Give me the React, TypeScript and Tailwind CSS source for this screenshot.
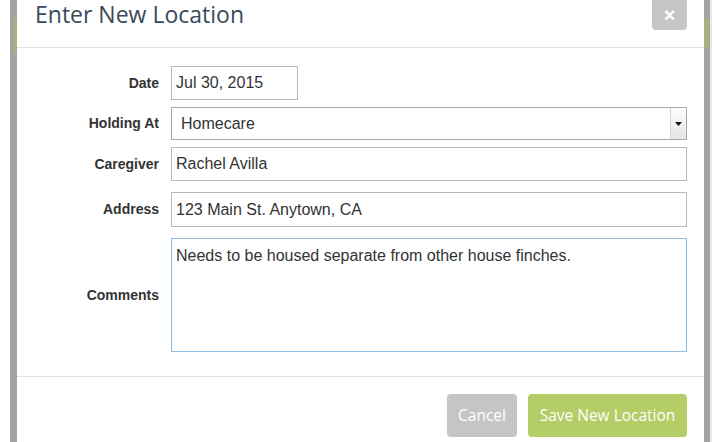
const sans = { fontFamily: '"Liberation Sans", Arial, sans-serif' };
const open = { fontFamily: '"Open Sans", sans-serif' };

function Label({ children }: { children: string }) {
  return (
    <div className="flex items-center justify-end text-[14px] font-bold text-[#333]">
      {children}
    </div>
  );
}

export default function App() {
  return (
    <div className="flex h-[442px] w-[712px] overflow-hidden bg-white">
      {/* backdrop edge, left */}
      <div className="w-[10px] shrink-0 bg-white" />
      <div className="flex w-[7px] shrink-0 flex-col bg-[#a3a3a3]">
        <div className="mt-[18px] ml-[4px] h-[34px] w-[3px] bg-[#a9b27c]" />
      </div>

      {/* modal */}
      <div className="flex w-[687px] shrink-0 flex-col bg-white">
        <div className="flex h-[48px] shrink-0 items-start justify-between border-b border-[#e3e3e3] pl-[18px] pr-[17px]">
          <h1 className="text-[23px] leading-[28px] text-[#3b4a5b]" style={open}>
            Enter New Location
          </h1>
          <button
            type="button"
            className="flex h-[30px] w-[35px] items-center justify-center rounded-b-[4px] bg-[#c6c6c6] text-[20px] font-bold leading-none text-white"
            style={sans}
          >
            ×
          </button>
        </div>

        <div
          className="grid grid-cols-[142px_1fr] gap-x-[12px] pr-[17px] pt-[18px]"
          style={sans}
        >
          <Label>Date</Label>
          <div className="flex h-[34px] w-[127px] items-center border border-[#b8b8b8] px-[4px] text-[16px] text-[#333]">
            Jul 30, 2015
          </div>

          <div className="col-span-2 h-[7px]" />
          <Label>Holding At</Label>
          <div className="flex h-[33px] items-center justify-between border border-[#a8a8a8] pl-[9px] text-[16px] text-[#333]">
            <span>Homecare</span>
            <span className="flex h-full w-[16px] items-center justify-center border-l border-[#d6d6d6] bg-gradient-to-b from-white to-[#e4e4e4]">
              <svg width="7" height="4" viewBox="0 0 7 4">
                <path d="M0 0h7L3.5 4z" fill="#111" />
              </svg>
            </span>
          </div>

          <div className="col-span-2 h-[7px]" />
          <Label>Caregiver</Label>
          <div className="flex h-[34px] items-center border border-[#b8b8b8] px-[4px] text-[16px] text-[#333]">
            Rachel Avilla
          </div>

          <div className="col-span-2 h-[11px]" />
          <Label>Address</Label>
          <div className="flex h-[35px] items-center border border-[#b8b8b8] px-[4px] text-[16px] text-[#333]">
            123 Main St. Anytown, CA
          </div>

          <div className="col-span-2 h-[11px]" />
          <Label>Comments</Label>
          <div className="h-[114px] border border-[#8fbde6] px-[4px] pt-[8px] text-[16px] leading-[18px] text-[#333]">
            Needs to be housed separate from other house finches.
          </div>
        </div>

        <div className="mt-[24px] flex shrink-0 justify-end gap-[11px] border-t border-[#e3e3e3] pr-[17px] pt-[17px]">
          <button
            type="button"
            className="h-[43px] w-[70px] rounded-[4px] bg-[#c5c5c5] text-[15.5px] text-white"
            style={open}
          >
            Cancel
          </button>
          <button
            type="button"
            className="h-[43px] w-[159px] rounded-[4px] bg-[#b4cd66] text-[15.5px] text-white"
            style={open}
          >
            Save New Location
          </button>
        </div>
      </div>

      {/* backdrop edge, right */}
      <div className="flex w-[6px] shrink-0 flex-col bg-[#a3a3a3]">
        <div className="mt-[18px] h-[30px] w-[5px] bg-[#a9b27c]" />
      </div>
      <div className="w-[2px] shrink-0 bg-[#e8e8e8]" />
    </div>
  );
}
